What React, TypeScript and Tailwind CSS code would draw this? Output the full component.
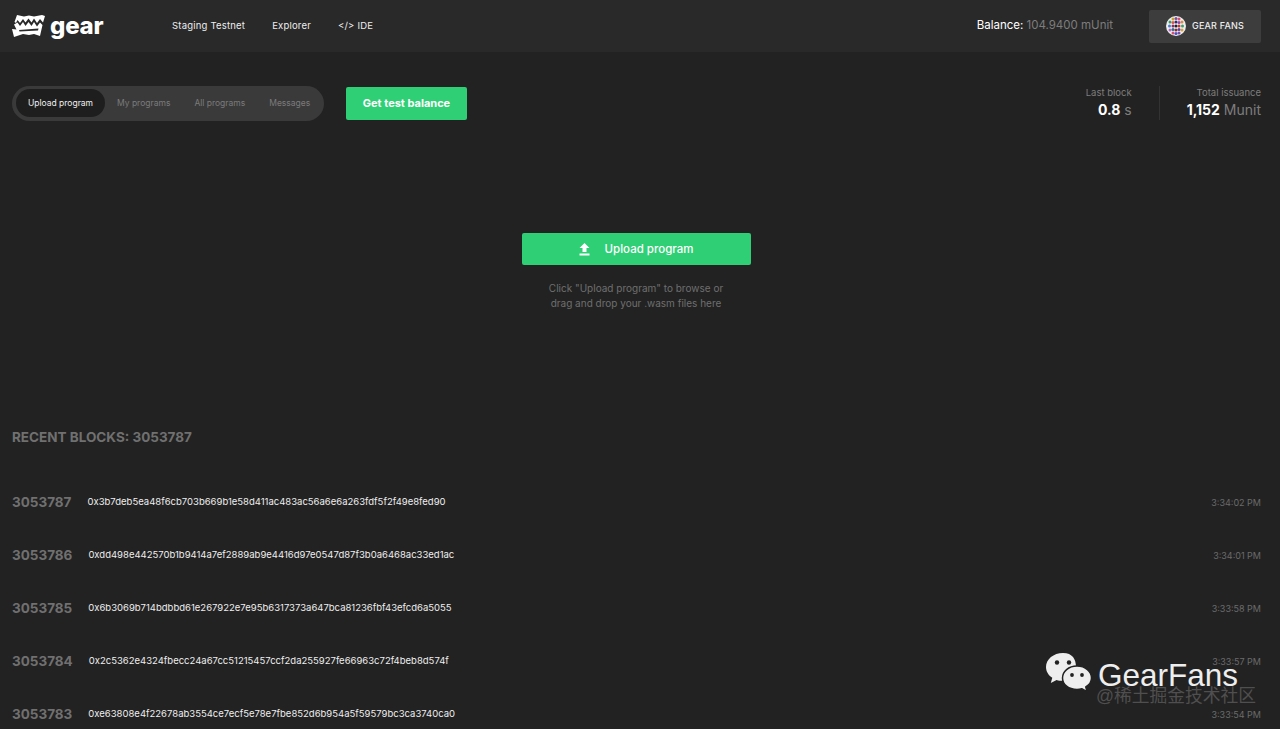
import React from 'react'

const navLinks = ['Staging Testnet', 'Explorer', '</> IDE']
const tabs = ['My programs', 'All programs', 'Messages']

const blocks = [
  { num: '3053787', hash: '0x3b7deb5ea48f6cb703b669b1e58d411ac483ac56a6e6a263fdf5f2f49e8fed90', time: '3:34:02 PM' },
  { num: '3053786', hash: '0xdd498e442570b1b9414a7ef2889ab9e4416d97e0547d87f3b0a6468ac33ed1ac', time: '3:34:01 PM' },
  { num: '3053785', hash: '0x6b3069b714bdbbd61e267922e7e95b6317373a647bca81236fbf43efcd6a5055', time: '3:33:58 PM' },
  { num: '3053784', hash: '0x2c5362e4324fbecc24a67cc51215457ccf2da255927fe66963c72f4beb8d574f', time: '3:33:57 PM' },
  { num: '3053783', hash: '0xe63808e4f22678ab3554ce7ecf5e78e7fbe852d6b954a5f59579bc3ca3740ca0', time: '3:33:54 PM' },
]

// identicon dots: x, y, colour
const dots: [number, number, string][] = [
  [7, 3, '#c9a227'], [10, 2.5, '#7b4fa0'], [13, 3, '#d94f70'],
  [4, 6, '#3a9a6a'], [7, 6.5, '#d9534f'], [10, 6, '#2b2b6e'], [13, 6.5, '#8e44ad'], [16, 6, '#e08a3c'],
  [3.5, 10, '#4a7fd0'], [7, 10, '#8e2d5a'], [10, 10, '#1f1f3a'], [13, 10, '#c0392b'], [16.5, 10, '#3fa06a'],
  [4, 14, '#b565c9'], [7, 13.5, '#2b6e8e'], [10, 14, '#8e2d2d'], [13, 13.5, '#5b3fa0'], [16, 14, '#d9a03c'],
  [7, 17, '#d94f70'], [10, 17.5, '#4a4fd0'], [13, 17, '#7b4fa0'],
]

function GearLogo() {
  return (
    <svg width="33" height="22" viewBox="0 0 33 22" fill="white" className="shrink-0">
      <path d="M5 0 L12 1.5 L17 0.5 L22 1.5 L30 0 L33 1 L31 7.5 L28 4 L25 8 L22 3.5 L19.5 7.5 L16.5 3.5 L13.5 7.5 L11 4 L8 8 L5.5 5 L4 8 L2.5 7 Z" />
      <path d="M2 9.5 L5.5 7.5 L8 11 L11 7 L13.5 11 L16.5 7 L19.5 11 L22 7 L25 11.5 L28 7.5 L30.5 10 L28 21 L22 19 L17 20 L11 19 L2 22 L0 14 L4.5 14.5 Z" />
      <path d="M7 15 L26.5 13.5 L26 15.5 L7.5 16.5 Z" fill="#292929" />
    </svg>
  )
}

function Avatar() {
  return (
    <svg width="20" height="20" viewBox="0 0 20 20" className="shrink-0">
      <circle cx="10" cy="10" r="10" fill="#eeeeee" />
      {dots.map(([x, y, c]) => (
        <circle key={`${x}-${y}`} cx={x} cy={y} r="1.5" fill={c} />
      ))}
    </svg>
  )
}

function WeChatMark() {
  return (
    <svg width="46" height="39" viewBox="0 0 46 39" className="shrink-0">
      <path d="M17 0 C7.5 0 0 6.3 0 14 C0 18.4 2.4 22.2 6.3 24.8 L4.8 30 L10.6 26.9 C12.5 27.5 14.5 27.8 17 27.8 C26.5 27.8 30 21 30 14 C30 6.3 26.5 0 17 0 Z" fill="#eeeeee" />
      <circle cx="11" cy="9.5" r="2.2" fill="#222222" />
      <circle cx="23" cy="9.5" r="2.2" fill="#222222" />
      <path d="M31 13 C22.5 13 16.5 18.5 16.5 25 C16.5 31.5 22.5 36.5 31 36.5 C32.8 36.5 34.4 36.2 36 35.7 L41 38.6 L39.8 34 C43.4 31.8 45.5 28.6 45.5 25 C45.5 18.5 39.5 13 31 13 Z" fill="#eeeeee" stroke="#222222" strokeWidth="1.5" />
      <circle cx="26" cy="22" r="1.9" fill="#222222" />
      <circle cx="36" cy="22" r="1.9" fill="#222222" />
    </svg>
  )
}

export default function App() {
  return (
    <div className="relative h-[729px] w-full overflow-hidden bg-[#222222] font-['Inter',sans-serif] text-white">
      {/* Header */}
      <header className="flex h-[52px] items-center bg-[#292929] pl-3 pr-[19px]">
        <div className="flex w-[160px] items-center gap-[5px]">
          <GearLogo />
          <span className="text-[24px] font-extrabold leading-none tracking-[-0.2px]">gear</span>
        </div>
        <nav className="flex items-center gap-[27px] text-[9.5px] tracking-[0.2px] text-[#eeeeee]">
          {navLinks.map((l) => (
            <span key={l}>{l}</span>
          ))}
        </nav>
        <div className="ml-auto flex items-center gap-9">
          <div className="text-[11.5px]">
            Balance: <span className="text-[#7d7d7d]">104.9400 mUnit</span>
          </div>
          <div className="flex h-[33px] w-[112px] items-center justify-center gap-[6px] rounded-xs bg-[#3d3d3d] text-[9px] font-medium tracking-[0.2px] text-[#eeeeee]">
            <Avatar />
            GEAR FANS
          </div>
        </div>
      </header>

      {/* Toolbar */}
      <div className="flex items-start justify-between pl-3 pr-[19px] pt-[34px]">
        <div className="flex items-center gap-[22px]">
          <div className="flex h-[35px] w-[312px] items-center rounded-full bg-[#3a3a3a] pb-px pl-1 text-[8.5px] text-[#7a7a7a]">
            <div className="flex h-[28px] w-[89px] items-center justify-center rounded-full bg-[#1e1e1e] text-[#eeeeee]">
              Upload program
            </div>
            <div className="flex items-center gap-[24px] pl-3">
              {tabs.map((t) => (
                <span key={t}>{t}</span>
              ))}
            </div>
          </div>
          <button className="flex h-[33px] w-[121px] items-center justify-center rounded-xs bg-[#2ecf75] text-[11px] font-bold text-white">
            Get test balance
          </button>
        </div>
        <div className="flex items-center">
          <div className="flex flex-col items-end border-r border-[#333333] pr-[27px]">
            <span className="text-[9.5px] text-[#7d7d7d]">Last block</span>
            <span className="text-[14px] leading-[20px]">
              <b className="font-bold">0.8</b> <span className="text-[#7d7d7d]">s</span>
            </span>
          </div>
          <div className="flex flex-col items-end pl-[27px]">
            <span className="text-[9.5px] text-[#7d7d7d]">Total issuance</span>
            <span className="text-[14px] leading-[20px]">
              <b className="font-bold">1,152</b> <span className="text-[#7d7d7d]">Munit</span>
            </span>
          </div>
        </div>
      </div>

      {/* Upload area */}
      <div className="mt-[112px] flex flex-col items-center pr-2">
        <button className="flex h-[32px] w-[229px] items-center justify-center gap-[15px] rounded-xs bg-[#2ecf75] pt-px text-[11.5px] font-medium text-white">
          <svg width="11" height="13" viewBox="0 0 11 13" fill="white">
            <path d="M5.5 0 L10.5 5 L7.5 5 L7.5 9 L3.5 9 L3.5 5 L0.5 5 Z" />
            <rect x="0.5" y="10.5" width="10" height="2" />
          </svg>
          Upload program
        </button>
        <p className="mt-[16px] text-center text-[10px] leading-[15px] text-[#6f6f6f]">
          Click "Upload program" to browse or
          <br />
          drag and drop your .wasm files here
        </p>
      </div>

      {/* Recent blocks */}
      <section className="pl-3 pr-[19px] pt-[116px]">
        <h2 className="text-[13.5px] font-bold leading-[20px] text-[#707070]">RECENT BLOCKS: 3053787</h2>
        <div className="mt-[29px] flex flex-col">
          {blocks.map((b) => (
            <div key={b.num} className="flex h-[53px] items-center">
              <span className="text-[13.5px] font-bold text-[#707070]">{b.num}</span>
              <span className="ml-4 text-[9.5px] text-[#eeeeee]">{b.hash}</span>
              <span className="ml-auto text-[9px] text-[#6b6b6b]">{b.time}</span>
            </div>
          ))}
        </div>
      </section>

      {/* Watermark */}
      <div className="absolute left-[1046px] top-[653px]">
        <WeChatMark />
      </div>
      <span className="absolute left-[1098px] top-[657px] font-['Liberation_Sans',sans-serif] text-[31.5px] leading-[36px] text-[#eeeeee]">
        GearFans
      </span>
      <div className="absolute left-[1096px] top-[686px] font-['Liberation_Sans','Noto_Sans_CJK_SC',sans-serif] text-[17.75px] leading-[20px] text-[#4f4f4f]">
        @稀土掘金技术社区
      </div>
    </div>
  )
}
